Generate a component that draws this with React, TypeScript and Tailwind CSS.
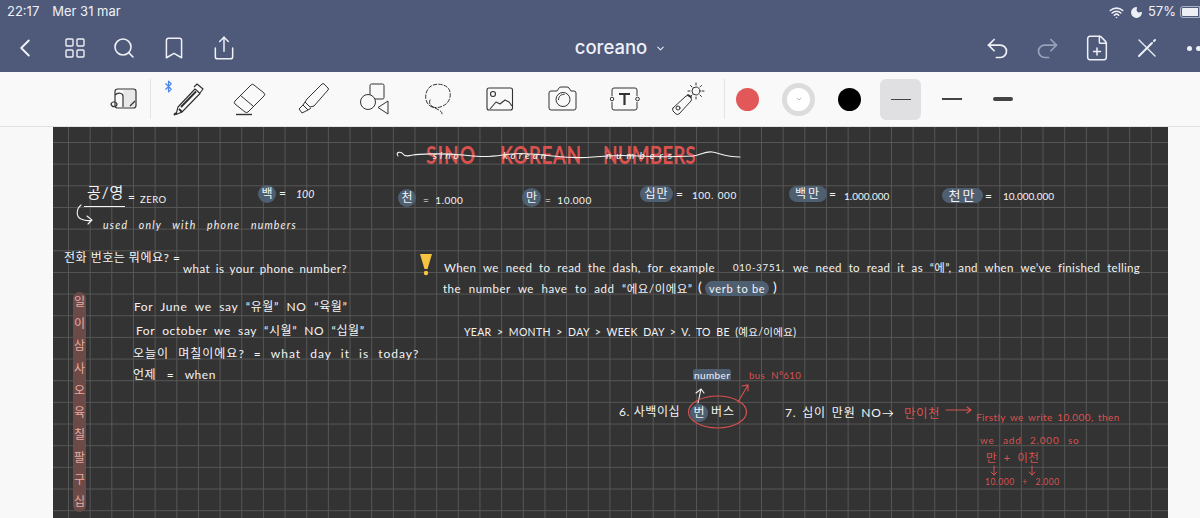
import type { ReactNode } from "react"
import { Bluetooth, Bookmark, ChevronDown, ChevronLeft, FilePlus, LayoutGrid, Moon, Redo2, Search, Share, Undo2, Wifi } from "lucide-react"

function Note({ className, children }: { className: string; children: ReactNode }) {
  return <span className={`absolute whitespace-nowrap leading-none ${className}`}>{children}</span>
}

function Tool({ children, className = "w-[62.5px]" }: { children: ReactNode; className?: string }) {
  return <div className={`flex h-full shrink-0 items-center justify-center ${className}`}>{children}</div>
}

function Separator() {
  return <div className="h-[40px] w-px shrink-0 bg-[#e4e4e4]" />
}

function SyncIcon() {
  return (
    <svg width="28" height="24" viewBox="0 0 28 24" fill="none" stroke="#333" strokeWidth="1.2">
      <path d="M13.500 3h12v17h-12z" fill="#e8e8e8" stroke="none" />
      <rect x="5" y="2" width="21" height="19" rx="2.500" />
      <path d="M5 8c3-3 8-2 8 1v11M1 17c1-3 5-3 6 0 0 3-5 4-6 0zM20 19l5-5" />
    </svg>
  )
}

function PenIcon() {
  return (
    <svg width="32" height="34" viewBox="0 0 32 34" fill="none" stroke="#2d2d2d" strokeWidth="1.100" strokeLinejoin="round">
      <path d="M6 25 23 7l5 4.500L10 30l-6 2.500z" />
      <path d="M9 25 24 9.500M7 27l3 3" strokeWidth="1.800" />
      <path d="m22 5 3-3 6 5-3 4" />
      <path d="M2 33l2-2" strokeWidth="2" />
    </svg>
  )
}

function EraserIcon() {
  return (
    <svg width="34" height="34" viewBox="0 0 34 34" fill="none" stroke="#333" strokeWidth="1" strokeLinejoin="round">
      <path d="M18 3q1.500-1.500 3 0l10 8q1.500 1.500 0 3L15 30q-1.500 1-3 0L2 22q-1.500-1.500 0-3z" />
      <path d="M7 13l13 11" />
      <path d="M3 32.500h16" strokeWidth="1.400" />
    </svg>
  )
}

function HighlighterIcon() {
  return (
    <svg width="34" height="34" viewBox="0 0 34 34" fill="none" stroke="#333" strokeWidth="1" strokeLinejoin="round">
      <path d="M11 17 26 2q1-1 2 0l4 4q1 1 0 2L18 24l-4 1-5-5z" />
      <path d="M9 20l-2 3 5 5 3-2M7 23l-4 4 3 4 6-3" />
    </svg>
  )
}

function ShapesIcon() {
  return (
    <svg width="32" height="32" viewBox="0 0 32 32" fill="none" stroke="#333" strokeWidth="1" strokeLinejoin="round">
      <rect x="11" y="1" width="14" height="15" rx="1.500" />
      <circle cx="9" cy="19" r="7.500" fill="#f9f9f9" />
      <path d="M29 18v13l-10-6.500z" fill="#f9f9f9" />
    </svg>
  )
}

function LassoIcon() {
  return (
    <svg width="30" height="32" viewBox="0 0 30 32" fill="none" stroke="#333" strokeWidth="1" strokeLinecap="round">
      <path d="M9 24C2 21 1 12 5 6s14-6 19-2 4 13-1 17-10 4-14 3" strokeDasharray="3.500 2" />
      <path d="M7 17c-2 5 3 7 7 9s5 3 5 5" strokeDasharray="3.500 2" />
    </svg>
  )
}

function ImageIcon() {
  return (
    <svg width="28" height="24" viewBox="0 0 28 24" fill="none" stroke="#333" strokeWidth="1.100" strokeLinejoin="round">
      <rect x="1" y="1" width="25.500" height="22" rx="2" />
      <circle cx="7" cy="7" r="2.500" />
      <path d="M4 22l6-7 4 2 5-4 4 2 3 4" />
    </svg>
  )
}

function CameraIcon() {
  return (
    <svg width="30" height="26" viewBox="0 0 30 26" fill="none" stroke="#333" strokeWidth="1" strokeLinejoin="round">
      <path d="M3 5h6l2-3q.5-1 2-1h6q1 0 2 1l2 3h3q2 0 2 2v15q0 2-2 2H3q-2 0-2-2V7q0-2 2-2z" />
      <circle cx="15" cy="13.500" r="7" />
      <path d="M10.500 14c0-4 3-6 6-5.500" />
    </svg>
  )
}

function TextBoxIcon() {
  return (
    <svg width="30" height="24" viewBox="0 0 30 24" fill="none" stroke="#333" strokeWidth="1">
      <path d="M2 9V3q0-2 2-2h21q2 0 2 2v6M2 15v6q0 2 2 2h21q2 0 2-2v-6" />
      <circle cx="2" cy="12" r="1.800" />
      <circle cx="27.500" cy="12" r="1.800" />
      <path d="M9 7h11M14.500 7v11" strokeWidth="2.200" />
    </svg>
  )
}

function LaserIcon() {
  return (
    <svg width="34" height="34" viewBox="0 0 34 34" fill="none" stroke="#333" strokeWidth="1" strokeLinecap="round">
      <path d="M2 26 15 14q2-1 3 0l2 2q1 2 0 3L8 32q-2 1-3 0l-3-3q-1-2 0-3z" />
      <circle cx="7" cy="26" r="2" />
      <path d="m17 13 3 2" strokeWidth="2" />
      <circle cx="25" cy="9" r="4" />
      <path d="M25 1v2M25 15v2M17 9h2M31 9h2M19.500 3.500 21 5M29 13l1.500 1.500M30.500 3.500 29 5M21 13l-1.500 1.500" />
    </svg>
  )
}

function PencilCrossIcon() {
  return (
    <svg width="20" height="20" viewBox="0 0 20 20" fill="none" stroke="#eef0f6" strokeWidth="1.300" strokeLinecap="round">
      <path d="M2 2l16 16" />
      <path d="M2 18 13 7l2-2" strokeWidth="2" />
      <path d="M17 3l1-1" strokeWidth="2" />
    </svg>
  )
}

export default function App() {
  return (
    <div className="flex h-[518px] w-[1200px] flex-col overflow-hidden bg-[#f8f8f8] font-['Inter',sans-serif]">
      <header className="h-[72px] shrink-0 bg-[#4f5a7b] text-[#eef0f6]">
        <div className="flex h-[24px] items-center justify-between pl-[7px] text-[13px]">
          <div className="flex gap-[13px]">
            <span>22:17</span>
            <span>Mer 31 mar</span>
          </div>
          <div className="flex items-center">
            <Wifi size={15} strokeWidth={2.5} />
            <Moon size={13} fill="currentColor" className="ml-[6px]" />
            <span className="ml-[5px]">57%</span>
            <div className="ml-[4px] h-[12px] w-[20px] rounded-l-[3px] border border-[#aab0c4] bg-[#eef0f6] bg-clip-content p-px" />
          </div>
        </div>
        <div className="flex h-[48px] items-center">
          <div className="flex w-[249px] shrink-0 items-center">
            <div className="flex w-[50px] justify-center"><ChevronLeft size={30} strokeWidth={1.6} /></div>
            <div className="flex w-[50px] justify-center"><LayoutGrid size={24} strokeWidth={1.4} /></div>
            <div className="flex w-[50px] justify-center"><Search size={24} strokeWidth={1.6} /></div>
            <div className="flex w-[50px] justify-center"><Bookmark size={26} strokeWidth={1.4} /></div>
            <div className="flex w-[50px] justify-center"><Share size={26} strokeWidth={1.4} /></div>
          </div>
          <div className="flex flex-1 items-center justify-center gap-[8px] pl-[20px]">
            <span className="text-[18.500px] font-medium">coreano</span>
            <ChevronDown size={11} strokeWidth={2.2} />
          </div>
          <div className="flex w-[228px] shrink-0 items-center">
            <div className="flex w-[50px] justify-center"><Undo2 size={27} strokeWidth={1.5} /></div>
            <div className="flex w-[50px] justify-center text-[#98a1b9]"><Redo2 size={27} strokeWidth={1.5} /></div>
            <div className="flex w-[50px] justify-center"><FilePlus size={28} strokeWidth={1.3} /></div>
            <div className="flex w-[50px] justify-center"><PencilCrossIcon /></div>
            <div className="flex w-[28px] gap-[4px] pl-[15px]">
              <span className="size-[5px] shrink-0 rounded-full bg-[#eef0f6]" />
              <span className="size-[5px] shrink-0 rounded-full bg-[#eef0f6]" />
            </div>
          </div>
        </div>
      </header>

      <div className="flex h-[55px] shrink-0 items-center border-b border-[#e2e2e2] bg-[#f9f9f9] pl-[97px]">
        <Tool className="w-[53px]"><SyncIcon /></Tool>
        <Separator />
        <div className="relative ml-[5.500px] flex h-full items-center">
          <Bluetooth size={13} strokeWidth={2.2} className="absolute left-[5px] top-[8px] text-[#4a86e8]" />
          <Tool><PenIcon /></Tool>
          <Tool><EraserIcon /></Tool>
          <Tool><HighlighterIcon /></Tool>
          <Tool><ShapesIcon /></Tool>
          <Tool><LassoIcon /></Tool>
          <Tool><ImageIcon /></Tool>
          <Tool><CameraIcon /></Tool>
          <Tool><TextBoxIcon /></Tool>
          <Tool><LaserIcon /></Tool>
        </div>
        <div className="ml-[5px]"><Separator /></div>
        <Tool className="w-[45px]"><span className="size-[23px] rounded-full bg-[#e25757]" /></Tool>
        <Tool className="ml-[3px] w-[51px]">
          <span className="flex size-[33px] items-center justify-center rounded-full border-[5px] border-[#dcdcdc] bg-white">
            <ChevronDown size={8} className="text-[#999]" />
          </span>
        </Tool>
        <Tool className="w-[51px]"><span className="size-[23px] rounded-full bg-black" /></Tool>
        <Tool className="w-[51px]">
          <span className="flex size-[41px] items-center justify-center rounded-[6px] bg-[#e0e0e2]">
            <span className="h-px w-[20px] bg-[#444]" />
          </span>
        </Tool>
        <Tool className="w-[51px]"><span className="h-[2px] w-[20px] bg-[#444]" /></Tool>
        <Tool className="w-[51px]"><span className="h-[4px] w-[20px] rounded-full bg-[#444]" /></Tool>
      </div>

      <main className="flex min-h-0 flex-1 pl-[53px]">
        <div className="relative h-full w-[1115px] shrink-0 overflow-hidden bg-[#333333] bg-[linear-gradient(#565656_1px,transparent_1px),linear-gradient(90deg,#565656_1px,transparent_1px)] bg-size-[21.670px_21.670px] bg-position-[15px_15px] font-['Lato','Noto_Sans_CJK_KR',sans-serif] text-[#f4f4f4]">
          {/* title */}
          <Note className="left-[373px] top-[18px] scale-y-125 text-[19px] font-bold tracking-[1px] text-[#d9524f]">SINO</Note>
          <Note className="left-[447px] top-[18px] scale-y-125 text-[19px] font-bold tracking-[0.500px] text-[#d9524f]">KOREAN</Note>
          <Note className="left-[550px] top-[18px] scale-y-125 text-[19px] font-bold text-[#d9524f]">NUMBERS</Note>
          <Note className="left-[380px] top-[23px] text-[10px] italic tracking-[3px]">sino</Note>
          <Note className="left-[450px] top-[23px] text-[10px] italic tracking-[3px]">korean</Note>
          <Note className="left-[553px] top-[23px] text-[10px] italic tracking-[5px]">numbers</Note>
          <svg className="absolute left-[340px] top-[18px]" width="350" height="20" viewBox="0 0 350 20" fill="none" stroke="#f4f4f4" strokeWidth="1.100" strokeLinecap="round">
            <path d="M5 11C2 7 8 6 10 9s6 2 10 1 30-2 50 0 25 2 40 0 20-2 40 0 30 4 50 2 30-2 45-1 35 1 55 0c8-1 12-5 19-4s14 5 28 5" />
          </svg>

          {/* number row */}
          <Note className="left-[34px] top-[58px] text-[15px] tracking-[1px]">공/영</Note>
          <div className="absolute left-[31px] top-[79px] h-px w-[41px] bg-[#f4f4f4]" />
          <Note className="left-[75px] top-[64px] text-[12px]">=</Note>
          <Note className="left-[87px] top-[68px] text-[9.500px] tracking-[0.500px]">ZERO</Note>
          <svg className="absolute left-[22px] top-[76px]" width="22" height="24" viewBox="0 0 22 24" fill="none" stroke="#f4f4f4" strokeWidth="1.100" strokeLinecap="round">
            <path d="M6 2C1 6 1 14 6 16s8 2 11 1M12 13l5 4-4 4" />
          </svg>
          <Note className="left-[50px] top-[93px] text-[10.500px] italic tracking-[1.200px] [word-spacing:7px]">used only with phone numbers</Note>

          <Note className="left-[205px] top-[58px] flex size-[18px] items-center justify-center rounded-full bg-[#4f5f72] text-[12px]">백</Note>
          <Note className="left-[226px] top-[60px] text-[12px]">=</Note>
          <Note className="left-[243px] top-[62px] text-[10.500px] italic">100</Note>
          <Note className="left-[345px] top-[62px] flex size-[18px] items-center justify-center rounded-full bg-[#4f5f72] text-[12px]">천</Note>
          <Note className="left-[370px] top-[68px] text-[10px] tracking-[0.500px] [word-spacing:3px]">= 1.000</Note>
          <Note className="left-[469px] top-[61px] flex size-[19px] items-center justify-center rounded-full bg-[#4f5f72] text-[12px]">만</Note>
          <Note className="left-[492px] top-[68px] text-[10px] tracking-[0.500px] [word-spacing:3px]">= 10.000</Note>
          <Note className="left-[587px] top-[59px] flex h-[16px] w-[33px] items-center justify-center rounded-full bg-[#4f5f72] text-[12px] tracking-[1px]">십만</Note>
          <Note className="left-[623px] top-[61px] text-[12px]">=</Note>
          <Note className="left-[639px] top-[63px] text-[10px] tracking-[0.500px] [word-spacing:1px]">100. 000</Note>
          <Note className="left-[736px] top-[59px] flex h-[16px] w-[38px] items-center justify-center rounded-full bg-[#4f5f72] text-[12px] tracking-[2px]">백만</Note>
          <Note className="left-[776px] top-[61px] text-[12px]">=</Note>
          <Note className="left-[791px] top-[64px] text-[10px]">1.000.000</Note>
          <Note className="left-[889px] top-[61px] flex h-[15px] w-[41px] items-center justify-center rounded-full bg-[#4f5f72] text-[13px] tracking-[2px]">천만</Note>
          <Note className="left-[932px] top-[63px] text-[12px]">=</Note>
          <Note className="left-[950px] top-[64px] text-[10px]">10.000.000</Note>

          {/* left column */}
          <Note className="left-[11px] top-[125px] text-[12px] tracking-[0.500px]">전화 번호는  뭐에요? =</Note>
          <Note className="left-[130px] top-[136px] text-[11.500px] tracking-[0.500px] [word-spacing:2px]">what is your phone number?</Note>

          <div className="absolute left-[20px] top-[165px] flex h-[220px] w-[13px] flex-col items-center justify-between rounded-full bg-[#6b4a48] py-[4px] text-[12px] leading-none text-[#e9a99d]">
            <span>일</span>
            <span>이</span>
            <span>삼</span>
            <span>사</span>
            <span>오</span>
            <span>육</span>
            <span>칠</span>
            <span>팔</span>
            <span>구</span>
            <span>십</span>
          </div>

          <Note className="left-[81px] top-[174px] text-[12px] tracking-[0.600px] [word-spacing:4px]">For June we say “유월” NO “육월”</Note>
          <Note className="left-[83px] top-[198px] text-[12px] tracking-[0.600px] [word-spacing:3.500px]">For october we say “시월” NO “십월”</Note>
          <Note className="left-[80px] top-[221px] text-[12px] tracking-[1px] [word-spacing:5px]">오늘이 며칠이에요? = what day it is today?</Note>
          <Note className="left-[80px] top-[242px] text-[12px] tracking-[0.500px] [word-spacing:7px]">언제 = when</Note>

          {/* dash note */}
          <svg className="absolute left-[367px] top-[126px]" width="13" height="23" viewBox="0 0 13 23" fill="#f5c542">
            <path d="M0 1h12L7.500 16h-3z" />
            <circle cx="6" cy="20" r="2.200" />
          </svg>
          <Note className="left-[391px] top-[135px] text-[11.500px] tracking-[0.400px] [word-spacing:3.500px]">When we need to read the dash, for example</Note>
          <Note className="left-[680px] top-[136px] text-[9.500px] tracking-[0.800px]">010-3751,</Note>
          <Note className="left-[740px] top-[135px] text-[11.500px] tracking-[0.300px] [word-spacing:3.700px]">we need to read it as “에”, and when we’ve finished telling</Note>
          <Note className="left-[390px] top-[156px] text-[11.500px] tracking-[0.500px] [word-spacing:4.200px]">the number we have to add “에요/이에요”</Note>
          <Note className="left-[645px] top-[153px] text-[14px]">(</Note>
          <Note className="left-[652px] top-[154px] rounded-full bg-[#4f5f72] px-[4px] py-[2px] text-[11px] tracking-[0.700px]">verb to be</Note>
          <Note className="left-[720px] top-[153px] text-[14px]">)</Note>

          <Note className="left-[411px] top-[200px] text-[10.500px] tracking-[0.300px] [word-spacing:2.500px]">YEAR &gt; MONTH &gt; DAY &gt; WEEK DAY &gt; V. TO BE (예요/이에요)</Note>

          {/* bus example */}
          <Note className="left-[640px] top-[242px] rounded-[3px] bg-[#4f5f72] px-px py-px text-[10px] tracking-[0.400px]">number</Note>
          <Note className="left-[696px] top-[244px] text-[9.500px] tracking-[0.500px] text-[#d9524f] [word-spacing:3px]">bus N°610</Note>
          <svg className="absolute left-[640px] top-[255px]" width="60" height="26" viewBox="0 0 60 26" fill="none" strokeWidth="1.100" strokeLinecap="round">
            <path d="M5 21 8 7M3 11l5-4 3 4" stroke="#f4f4f4" />
            <path d="M45 20 55 3M49 4l6-1v6" stroke="#d9524f" />
          </svg>
          <Note className="left-[566px] top-[279px] text-[12px] tracking-[0.600px]">6. 사백이십</Note>
          <Note className="left-[637px] top-[277px] flex size-[18px] items-center justify-center rounded-full bg-[#4f5f72] text-[12px]">번</Note>
          <Note className="left-[658px] top-[279px] text-[12px] tracking-[1px]">버스</Note>
          <svg className="absolute left-[634px] top-[268px]" width="62" height="36" viewBox="0 0 62 36" fill="none" stroke="#d9524f" strokeWidth="1.200">
            <ellipse cx="30.500" cy="17" rx="29" ry="16" />
          </svg>

          {/* 7 */}
          <Note className="left-[732px] top-[280px] text-[12px] tracking-[0.800px] [word-spacing:2px]">7. 십이 만원 NO→</Note>
          <Note className="left-[851px] top-[281px] text-[12.500px] tracking-[0.500px] text-[#d9524f]">만이천</Note>
          <svg className="absolute left-[892px] top-[278px]" width="28" height="10" viewBox="0 0 28 10" fill="none" stroke="#d9524f" strokeWidth="1.100" strokeLinecap="round">
            <path d="M1 5h25M22 2l4 3-4 3" />
          </svg>
          <Note className="left-[923px] top-[285px] text-[10px] tracking-[0.400px] text-[#d9524f] [word-spacing:1.500px]">Firstly we write 10.000, then</Note>
          <Note className="left-[927px] top-[308px] text-[10px] tracking-[0.800px] text-[#d9524f] [word-spacing:5px]">we add 2.000 so</Note>
          <Note className="left-[933px] top-[325px] text-[11.500px] tracking-[0.500px] text-[#d9524f] [word-spacing:3px]">만 + 이천</Note>
          <svg className="absolute left-[936px] top-[338px]" width="48" height="12" viewBox="0 0 48 12" fill="none" stroke="#d9524f" strokeWidth="1" strokeLinecap="round">
            <path d="M5 1v9M2 7l3 3 3-3M43 1v9M40 7l3 3 3-3" />
          </svg>
          <Note className="left-[932px] top-[351px] text-[8.500px] tracking-[0.500px] text-[#d9524f] [word-spacing:5px]">10.000 + 2.000</Note>
        </div>
      </main>
    </div>
  )
}
